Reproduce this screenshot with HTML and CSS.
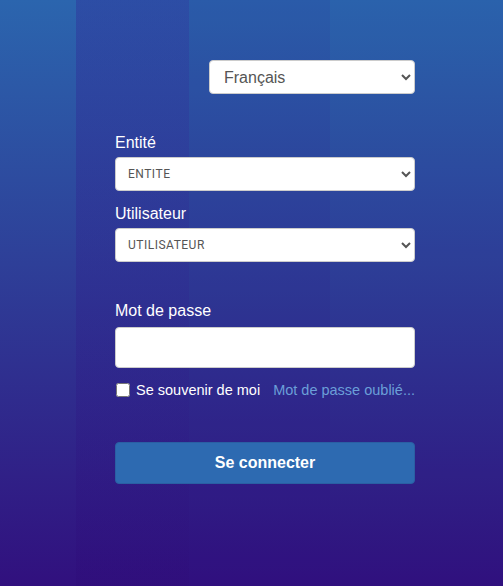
FILE: index.html
```html
<!DOCTYPE html>
<html lang="fr">
<head>
<meta charset="utf-8">
<title>Connexion</title>
<link rel="stylesheet" href="styles.css">
</head>
<body>
<div class="bg">
  <div class="stripe s1"></div>
  <div class="stripe s2"></div>
  <div class="stripe s3"></div>
  <div class="stripe s4"></div>
</div>
<main class="login">
  <div class="lang-row">
    <select class="lang">
      <option>Français</option>
    </select>
  </div>
  <label class="label first">Entité</label>
  <select class="field">
    <option>ENTITE</option>
  </select>
  <label class="label">Utilisateur</label>
  <select class="field">
    <option>UTILISATEUR</option>
  </select>
  <label class="label pw">Mot de passe</label>
  <input class="input" type="password">
  <div class="opts">
    <label class="remember"><input type="checkbox" class="cb"> Se souvenir de moi</label>
    <a class="forgot" href="#">Mot de passe oublié...</a>
  </div>
  <button class="btn">Se connecter</button>
</main>
</body>
</html>
```

FILE: styles.css
```css
html, body {
  margin: 0;
  padding: 0;
  height: 100%;
}
body {
  font-family: "Liberation Sans", Arial, sans-serif;
  background: linear-gradient(to bottom, #2b65ae 0%, #2e3f98 45%, #31107e 100%);
  position: relative;
  overflow: hidden;
}
.bg {
  position: absolute;
  inset: 0;
  display: flex;
  pointer-events: none;
}
.stripe { height: 100%; }
.s1 { width: 76px; background: rgba(255,255,255,0.0); }
.s2 { width: 113px; background: linear-gradient(to bottom, rgba(50,10,140,0.26), rgba(40,0,110,0.14)); }
.s3 { width: 141px; background: rgba(40,10,130,0.1); }
.s4 { flex: 1; background: rgba(40,20,140,0.03); }

.login {
  position: relative;
  width: 300px;
  margin-left: 115px;
  padding-top: 60px;
  display: flex;
  flex-direction: column;
}
.lang-row {
  display: flex;
  justify-content: flex-end;
}
.lang {
  width: 206px;
  height: 34px;
  border: 1px solid #ccc;
  border-radius: 4px;
  background: #fff;
  color: #555;
  font-family: "Liberation Sans", Arial, sans-serif;
  font-size: 16px;
  padding: 0 10px;
}
.label {
  color: #fff;
  font-size: 16px;
  line-height: 18px;
  margin-bottom: 5px;
}
.label.first { margin-top: 40px; }
.label.pw { margin-top: 26px; margin-bottom: 7px; }
.field {
  width: 300px;
  height: 34px;
  border: 1px solid #ccc;
  border-radius: 4px;
  background: #fff;
  color: #555;
  font-family: Roboto, "Liberation Sans", sans-serif;
  font-size: 12px;
  letter-spacing: 0.5px;
  padding: 0 8px;
  margin-bottom: 14px;
}
.input {
  width: 300px;
  height: 41px;
  box-sizing: border-box;
  border: 1px solid #ccc;
  border-radius: 4px;
  background: #fff;
  margin: 0;
}
.opts {
  display: flex;
  justify-content: space-between;
  align-items: center;
  margin-top: 14px;
  font-size: 14.5px;
}
.remember {
  color: #fff;
  display: flex;
  align-items: center;
}
.cb {
  width: 14px;
  height: 14px;
  margin: 0 6px 0 1px;
}
.forgot {
  color: #6b9fd8;
  text-decoration: none;
}
.btn {
  margin-top: 44px;
  width: 300px;
  height: 42px;
  border: 1px solid #2a5fa3;
  border-radius: 4px;
  background: #2d6ab1;
  color: #fff;
  font-family: "Liberation Sans", Arial, sans-serif;
  font-size: 16px;
  font-weight: bold;
}
```
